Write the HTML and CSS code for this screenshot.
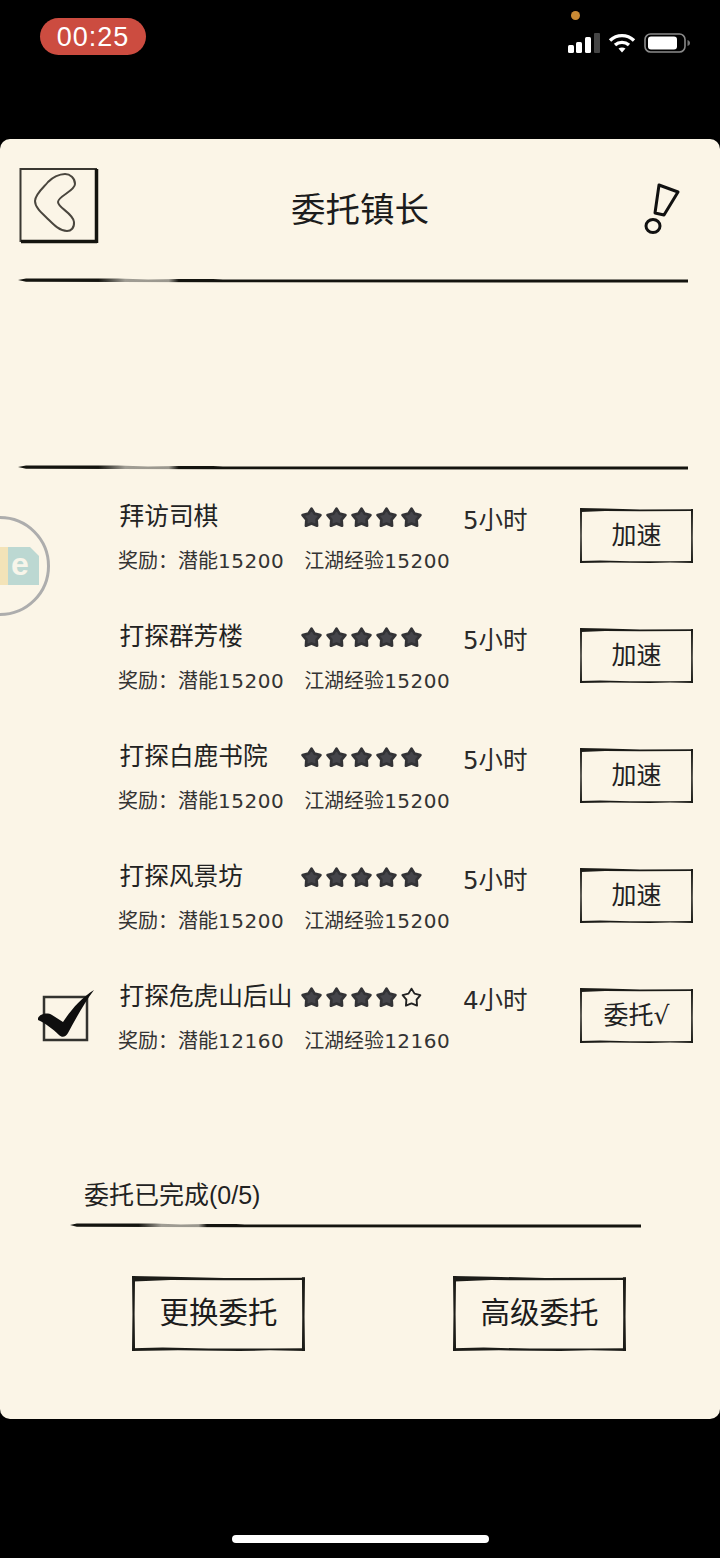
FILE: index.html
```html
<!DOCTYPE html>
<html lang="zh">
<head>
  <meta charset="UTF-8" />
  <title>委托镇长</title>
  <link rel="stylesheet" href="styles.css">
</head>
<body>
  <!-- brush strokes used all over the page -->
  <svg class="defs" aria-hidden="true">
    <defs>
      <linearGradient id="ink-fade">
        <stop offset="0" stop-color="#14140f" />
        <stop offset="0.12" stop-color="#14140f" />
        <stop offset="0.16" stop-color="#a09d94" />
        <stop offset="0.225" stop-color="#9a978e" />
        <stop offset="0.24" stop-color="#14140f" />
        <stop offset="1" stop-color="#14140f" />
      </linearGradient>
    </defs>
    <symbol id="brush-rule" viewBox="0 0 670 6" preserveAspectRatio="none">
      <path fill="url(#ink-fade)" d="M0 2 L8 0.500 L100 0.500 L130 1.500 L160 1 L195 1 L205 1.500 L670 1.500 L670 4.500 L205 4.300 L100 4 L8 3.800 Z" />
    </symbol>
    <symbol id="brush-frame" viewBox="0 0 113 55" preserveAspectRatio="none">
      <path d="M0 0 L25 0.500 L60 1.500 L113 1.200 L113 3 L60 3.200 L25 3 L1 4 Z" />
      <path d="M0 0 L2 0 L1.700 28 L2 55 L0 55 L0.300 28 Z" />
      <path d="M111 1 L113 1 L112.700 30 L113 55 L111 55 L111.200 30 Z" />
      <path d="M0 53 L20 52.500 L50 53.200 L90 53.200 L113 53 L113 55 L90 54.500 L70 55 L30 54.500 L0 55 Z" />
    </symbol>
    <symbol id="star" viewBox="0 0 22 22">
      <path d="M11 2.500 L13.900 7.300 L19.500 8.700 L15.900 13.050 L16.300 18.800 L11 16.700 L5.700 18.800 L6.100 13.050 L2.500 8.700 L8.100 7.300 Z" stroke-linejoin="round" />
    </symbol>
  </svg>

  <header class="status">
    <span class="clock">00:25</span>
    <div class="status-icons">
      <span class="privacy-dot"></span>
      <svg class="signal" viewBox="0 0 32 20" width="32" height="20">
        <rect x="0" y="12" width="6" height="8" rx="1.500" fill="#fff" />
        <rect x="8" y="9" width="6" height="11" rx="1.500" fill="#fff" />
        <rect x="17" y="4" width="6" height="16" rx="1.500" fill="#fff" />
        <rect x="26" y="0" width="6" height="20" rx="1" fill="#444" />
      </svg>
      <svg class="wifi" viewBox="0 0 28 20" width="28" height="20" fill="none" stroke="#fff" stroke-width="3.400">
        <path d="M2 7.500 C9 1 19 1 26 7.500" />
        <path d="M7 12 C11 8.500 17 8.500 21 12" />
        <path d="M14 19.500 L10.500 15.500 C12.500 14 15.500 14 17.500 15.500 Z" fill="#fff" stroke="none" />
      </svg>
      <svg class="battery" viewBox="0 0 46 20" width="46" height="20">
        <rect x="1" y="1" width="40" height="18" rx="5.500" fill="none" stroke="#8a8a8a" stroke-width="1.600" />
        <rect x="4" y="3.500" width="29" height="13" rx="3" fill="#fff" />
        <path d="M43.500 7 C45 7.500 46 8.500 46 10 C46 11.500 45 12.500 43.500 13 Z" fill="#777" />
      </svg>
    </div>
  </header>

  <main class="card">
    <div class="topbar">
      <button class="back-btn" aria-label="返回">
        <svg viewBox="0 0 81 77" width="81" height="77" fill="none">
          <path d="M2.500 2 H78 V74 H2.500 Z" stroke="#3a3832" stroke-width="2" />
          <path d="M3 74.500 H79 M78.500 2 V76" stroke="#14140f" stroke-width="3.500" />
          <path d="M47 7 C52 7 57 11 57 17 C57 24 40 29 40 35 C40 41 55 46 56 55 C56.500 61 53 64 49 64 C42 64 36 58 31 53 C25 47 17 41 17 34 C17 27 26 20 30 15 C34 11 41 7 47 7 Z" stroke="#4a463e" stroke-width="2" />
        </svg>
      </button>
      <h1 class="title">委托镇长</h1>
      <svg class="help" viewBox="0 0 37 52" width="37" height="52" fill="none" stroke="#111" stroke-width="3" aria-hidden="true">
        <path d="M16 2 L35 9 L21 32 L12 30 Z" stroke-linejoin="round" />
        <ellipse cx="10" cy="43" rx="7" ry="6.500" />
      </svg>
    </div>

    <svg class="rule"><use href="#brush-rule" /></svg>
    <div class="notice"></div>
    <svg class="rule"><use href="#brush-rule" /></svg>

    <div class="ball">
      <svg viewBox="0 0 40 38" width="40" height="38" aria-hidden="true">
        <rect x="0" y="0" width="8" height="38" fill="#f3e3b8" />
        <path d="M8 0 H30 L39 9 V38 H8 Z" fill="#bcd8d2" />
        <text x="11" y="28" class="ball-letter">e</text>
      </svg>
    </div>

    <ul class="tasks">
      <li class="task">
        <div class="task-check"></div>
        <div class="task-name">拜访司棋</div>
        <div class="stars">
          <svg class="on"><use href="#star" /></svg><svg class="on"><use href="#star" /></svg><svg class="on"><use href="#star" /></svg><svg class="on"><use href="#star" /></svg><svg class="on"><use href="#star" /></svg>
        </div>
        <div class="task-time">5小时</div>
        <div class="reward">奖励：潜能<span class="num">15200</span><span class="reward-exp">江湖经验<span class="num">15200</span></span></div>
        <button class="task-btn"><svg class="frame"><use href="#brush-frame" /></svg>加速</button>
      </li>
      <li class="task">
        <div class="task-check"></div>
        <div class="task-name">打探群芳楼</div>
        <div class="stars">
          <svg class="on"><use href="#star" /></svg><svg class="on"><use href="#star" /></svg><svg class="on"><use href="#star" /></svg><svg class="on"><use href="#star" /></svg><svg class="on"><use href="#star" /></svg>
        </div>
        <div class="task-time">5小时</div>
        <div class="reward">奖励：潜能<span class="num">15200</span><span class="reward-exp">江湖经验<span class="num">15200</span></span></div>
        <button class="task-btn"><svg class="frame"><use href="#brush-frame" /></svg>加速</button>
      </li>
      <li class="task">
        <div class="task-check"></div>
        <div class="task-name">打探白鹿书院</div>
        <div class="stars">
          <svg class="on"><use href="#star" /></svg><svg class="on"><use href="#star" /></svg><svg class="on"><use href="#star" /></svg><svg class="on"><use href="#star" /></svg><svg class="on"><use href="#star" /></svg>
        </div>
        <div class="task-time">5小时</div>
        <div class="reward">奖励：潜能<span class="num">15200</span><span class="reward-exp">江湖经验<span class="num">15200</span></span></div>
        <button class="task-btn"><svg class="frame"><use href="#brush-frame" /></svg>加速</button>
      </li>
      <li class="task">
        <div class="task-check"></div>
        <div class="task-name">打探风景坊</div>
        <div class="stars">
          <svg class="on"><use href="#star" /></svg><svg class="on"><use href="#star" /></svg><svg class="on"><use href="#star" /></svg><svg class="on"><use href="#star" /></svg><svg class="on"><use href="#star" /></svg>
        </div>
        <div class="task-time">5小时</div>
        <div class="reward">奖励：潜能<span class="num">15200</span><span class="reward-exp">江湖经验<span class="num">15200</span></span></div>
        <button class="task-btn"><svg class="frame"><use href="#brush-frame" /></svg>加速</button>
      </li>
      <li class="task">
        <div class="task-check">
          <svg viewBox="0 0 58 54" width="58" height="54" aria-hidden="true">
            <path d="M7 9 H50 V52 H7 Z" fill="none" stroke="#33332f" stroke-width="2.500" />
            <path d="M1 30 C3 26 10 24 15 27 L26 34 C34 22 44 10 57 2 C48 14 39 30 31 45 C29 49 25 50 22 47 C16 41 8 35 1 32 Z" fill="#0e0e0e" />
          </svg>
        </div>
        <div class="task-name">打探危虎山后山</div>
        <div class="stars">
          <svg class="on"><use href="#star" /></svg><svg class="on"><use href="#star" /></svg><svg class="on"><use href="#star" /></svg><svg class="on"><use href="#star" /></svg><svg class="off"><use href="#star" /></svg>
        </div>
        <div class="task-time">4小时</div>
        <div class="reward">奖励：潜能<span class="num">12160</span><span class="reward-exp">江湖经验<span class="num">12160</span></span></div>
        <button class="task-btn"><svg class="frame"><use href="#brush-frame" /></svg>委托√</button>
      </li>
    </ul>

    <div class="progress">委托已完成<span class="progress-num">(0/5)</span></div>
    <svg class="rule rule-short"><use href="#brush-rule" /></svg>

    <div class="actions">
      <button class="big-btn"><svg class="frame"><use href="#brush-frame" /></svg>更换委托</button>
      <button class="big-btn"><svg class="frame"><use href="#brush-frame" /></svg>高级委托</button>
    </div>
  </main>

  <footer class="home">
    <span class="home-bar"></span>
  </footer>
</body>
</html>
```

FILE: styles.css
```css
* {
  box-sizing: border-box;
}

html, body {
  margin: 0;
  height: 100%;
}

body {
  width: 720px;
  height: 1558px;
  overflow: hidden;
  background: #000;
  color: #222;
  font-family: "DejaVu Sans", "Noto Sans CJK SC", sans-serif;
}

/* not display:none, the gradient in it has to stay usable */
.defs {
  position: absolute;
  width: 0;
  height: 0;
}

button {
  padding: 0;
  border: none;
  background: none;
  color: inherit;
  font: inherit;
}

/* Status bar */
.status {
  display: flex;
  justify-content: space-between;
  align-items: flex-start;
  height: 139px;
  padding: 18px 30px 0 40px;
}

.clock {
  width: 106px;
  height: 37px;
  border-radius: 19px;
  background: #cc4c40;
  color: #fff;
  font-family: "Liberation Sans", sans-serif;
  font-size: 27px;
  line-height: 38px;
  letter-spacing: 1px;
  text-align: center;
}

.status-icons {
  position: relative;
  display: flex;
  align-items: center;
  gap: 8px;
  margin-top: 15px;
}

.privacy-dot {
  position: absolute;
  top: -22px;
  left: 3px;
  width: 9px;
  height: 9px;
  border-radius: 50%;
  background: #c98a35;
}

/* Main card */
.card {
  position: relative;
  height: 1280px;
  border-radius: 10px;
  background: #fbf5e7;
}

.topbar {
  display: grid;
  grid-template-columns: 1fr auto 1fr;
  align-items: start;
  padding: 28px 18px 0;
}

.back-btn {
  justify-self: start;
  height: 77px;
}

.title {
  margin: 0;
  padding-top: 18px;
  font-size: 34.5px;
  font-weight: 400;
  line-height: 50px;
  color: #1c1c1c;
}

.help {
  justify-self: end;
  margin: 16px 22px 0 0;
}

.rule {
  display: block;
  width: 670px;
  height: 6px;
  margin: 34px 0 0 18px;
}

.notice {
  height: 147px;
}

.rule-short {
  width: 571px;
  margin: 0 0 0 70px;
}

/* Floating assistant ball */
.ball {
  position: absolute;
  top: 377px;
  left: -50px;
  display: flex;
  align-items: center;
  justify-content: flex-end;
  width: 100px;
  height: 100px;
  border: 3px solid #adadad;
  border-radius: 50%;
  padding-right: 7px;
  background: #fbf5e7;
  overflow: hidden;
}

.ball svg {
  flex-shrink: 0;
}

.ball-letter {
  font-family: "Liberation Sans", sans-serif;
  font-size: 32px;
  font-weight: 700;
  fill: #f8f5ea;
}

/* Task list */
.tasks {
  list-style: none;
  margin: 0;
  padding: 19px 0 0;
}

.task {
  display: grid;
  grid-template-columns: 118px 183px 162px 117px 113px;
  grid-template-rows: 52px 36px;
  height: 120px;
}

.task-check {
  grid-row: 1 / 3;
  padding: 18px 0 0 37px;
}

.task-name {
  padding-left: 1.500px;
  font-size: 24.7px;
  line-height: 54px;
  white-space: nowrap;
  color: #222;
}

.stars {
  display: flex;
  gap: 2px;
  align-items: center;
  height: 55px;
  margin-left: -1.500px;
}

.stars svg {
  width: 23px;
  height: 23px;
  flex-shrink: 0;
}

.stars .on {
  fill: #45454a;
  stroke: #333336;
  stroke-width: 2.600;
}

.stars .off {
  fill: #fbf5e7;
  stroke: #222;
  stroke-width: 1.800;
}

.task-time {
  font-size: 24.500px;
  line-height: 62px;
  white-space: nowrap;
  color: #2a2a2a;
}

.reward {
  grid-column: 2 / 5;
  grid-row: 2;
  font-size: 20px;
  line-height: 38px;
  white-space: nowrap;
  color: #333;
}

.num {
  letter-spacing: 0.500px;
}

.reward-exp {
  margin-left: 20px;
}

.task-btn {
  grid-column: 5;
  grid-row: 1 / 3;
  position: relative;
  align-self: start;
  width: 113px;
  height: 55px;
  margin-top: 18px;
  font-size: 25px;
  line-height: 55px;
  color: #222;
}

.frame {
  position: absolute;
  inset: 0;
  width: 100%;
  height: 100%;
  fill: #1c1c18;
}

/* Bottom part */
.progress {
  height: 53px;
  margin-top: 80px;
  padding-left: 84px;
  font-size: 25px;
  line-height: 50px;
  color: #222;
}

.progress-num {
  font-family: "Liberation Sans", sans-serif;
}

.actions {
  display: flex;
  gap: 148px;
  padding: 47px 0 0 132px;
}

.big-btn {
  position: relative;
  width: 173px;
  height: 75px;
  font-size: 29.5px;
  line-height: 75px;
  color: #1c1c1c;
}

/* Home indicator */
.home {
  display: flex;
  justify-content: center;
  padding-top: 116px;
}

.home-bar {
  width: 257px;
  height: 8px;
  border-radius: 4px;
  background: #fff;
}
```
